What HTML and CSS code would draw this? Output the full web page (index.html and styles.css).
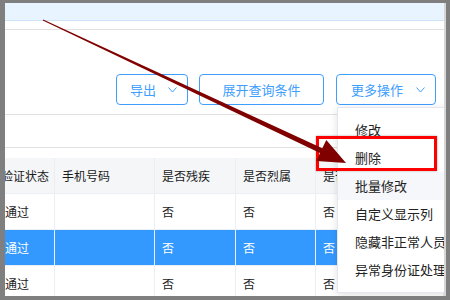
FILE: index.html
```html
<!DOCTYPE html>
<html lang="zh-CN">
<head>
    <meta charset="UTF-8">
    <title>人员列表</title>
    <link rel="stylesheet" href="styles.css">
</head>
<body>
    <div class="screen">
        <!-- top tab strip -->
        <div class="tabbar"></div>

        <div class="panel">
            <!-- toolbar buttons -->
            <div class="toolbar">
                <button class="btn">导出
                    <svg class="chev" width="9" height="6" viewBox="0 0 9 6"><polyline points="0.5,0.5 4.5,5 8.5,0.5" fill="none" stroke="#409eff" stroke-width="1"/></svg>
                </button>
                <button class="btn btn-wide">展开查询条件</button>
                <button class="btn btn-more">更多操作
                    <svg class="chev" width="9" height="6" viewBox="0 0 9 6"><polyline points="0.5,0.5 4.5,5 8.5,0.5" fill="none" stroke="#409eff" stroke-width="1"/></svg>
                </button>
            </div>
            <div class="spacer"></div>

            <!-- table -->
            <div class="grid">
                <div class="cell head first">验证状态</div>
                <div class="cell head">手机号码</div>
                <div class="cell head">是否残疾</div>
                <div class="cell head">是否烈属</div>
                <div class="cell head">是否</div>

                <div class="cell first">通过</div>
                <div class="cell"></div>
                <div class="cell">否</div>
                <div class="cell">否</div>
                <div class="cell">否</div>

                <div class="cell sel first">通过</div>
                <div class="cell sel"></div>
                <div class="cell sel">否</div>
                <div class="cell sel">否</div>
                <div class="cell sel">否</div>

                <div class="cell first">通过</div>
                <div class="cell"></div>
                <div class="cell">否</div>
                <div class="cell">否</div>
                <div class="cell">否</div>
            </div>
        </div>

        <!-- dropdown of 更多操作 -->
        <ul class="menu">
            <li>修改</li>
            <li>删除</li>
            <li class="hover">批量修改</li>
            <li>自定义显示列</li>
            <li>隐藏非正常人员</li>
            <li>异常身份证处理</li>
        </ul>
    </div>

    <!-- annotation -->
    <div class="mark"></div>
    <svg class="arrow" width="450" height="300" viewBox="0 0 450 300">
        <polygon points="43.2,19.5 322.3,148.2 326.3,139.9 346,163 316.3,161.1 320,153 42.8,20.5" fill="#800000"/>
    </svg>
</body>
</html>
```

FILE: styles.css
```css
/* Global */
body {
    margin: 0;
    width: 450px;
    height: 300px;
    background: #7f7f7f;
    font-family: "Noto Sans CJK SC", "Noto Sans", sans-serif;
    color: #222;
    overflow: hidden;
    position: relative;
}

.screen {
    position: relative;
    margin: 3px 4px 0 5px;
    height: 293px;
    background: #fff;
    border-right: 2px solid #d6d6d6;
    overflow: hidden;
}

/* Tab strip */
.tabbar {
    height: 17px;
    background: #e8f4ff;
    border-bottom: 1px solid #cde3fa;
}

.panel {
    margin-top: 8px;
    border-top: 1px solid #e2e2e2;
}

/* Toolbar */
.toolbar {
    display: flex;
    gap: 11px;
    padding: 44px 0 9px 111px;
    border-bottom: 1px solid #e2e2e2;
}

.btn {
    display: flex;
    align-items: center;
    height: 31px;
    box-sizing: border-box;
    padding: 0 10px 0 13px;
    border: 1px solid #409eff;
    border-radius: 4px;
    background: #fff;
    color: #409eff;
    font-family: inherit;
    font-size: 13px;
    width: 72px;
}

.btn .chev {
    margin-left: auto;
}

.btn-wide {
    width: 125px;
    justify-content: center;
    padding: 0;
}

.btn-more {
    width: 100px;
    margin-left: 1px;
    padding-left: 14px;
}

.spacer {
    height: 32px;
    border-bottom: 1px solid #e2e2e2;
    margin-bottom: 10px;
}

/* Table */
.grid {
    display: grid;
    grid-template-columns: 50px 100px 81px 80px 1fr;
    font-size: 12px;
}

.cell {
    height: 36px;
    box-sizing: border-box;
    display: flex;
    align-items: center;
    padding-left: 7px;
    border-right: 1px solid #ebeef5;
    border-bottom: 1px solid #ebeef5;
    white-space: nowrap;
    overflow: hidden;
}

.cell.first {
    padding-left: 0;
}

.cell.head {
    background: #f5f6f8;
    color: #1a1a1a;
}

.cell.head.first {
    text-indent: -4px;
}

.cell.sel {
    background: #3399ff;
    color: #fff;
    border-right-color: #e8f2ff;
}

/* Dropdown */
.menu {
    position: absolute;
    left: 332px;
    top: 104px;
    width: 120px;
    margin: 0;
    padding: 8px 0;
    list-style: none;
    background: #fff;
    border: 1px solid #e4e7ed;
    box-shadow: 0 2px 8px rgba(0, 0, 0, 0.12);
    font-size: 13px;
    color: #222;
}

.menu li {
    height: 28px;
    line-height: 28px;
    padding-left: 17px;
    white-space: nowrap;
}

.menu li.hover {
    background: #f5f7fa;
}

/* Annotation */
.mark {
    position: absolute;
    left: 316px;
    top: 136px;
    width: 115px;
    height: 29px;
    border: 3px solid #ff0000;
    box-shadow: 0 0 2px rgba(0, 0, 0, 0.35);
}

.arrow {
    position: absolute;
    left: 0;
    top: 0;
}
```
